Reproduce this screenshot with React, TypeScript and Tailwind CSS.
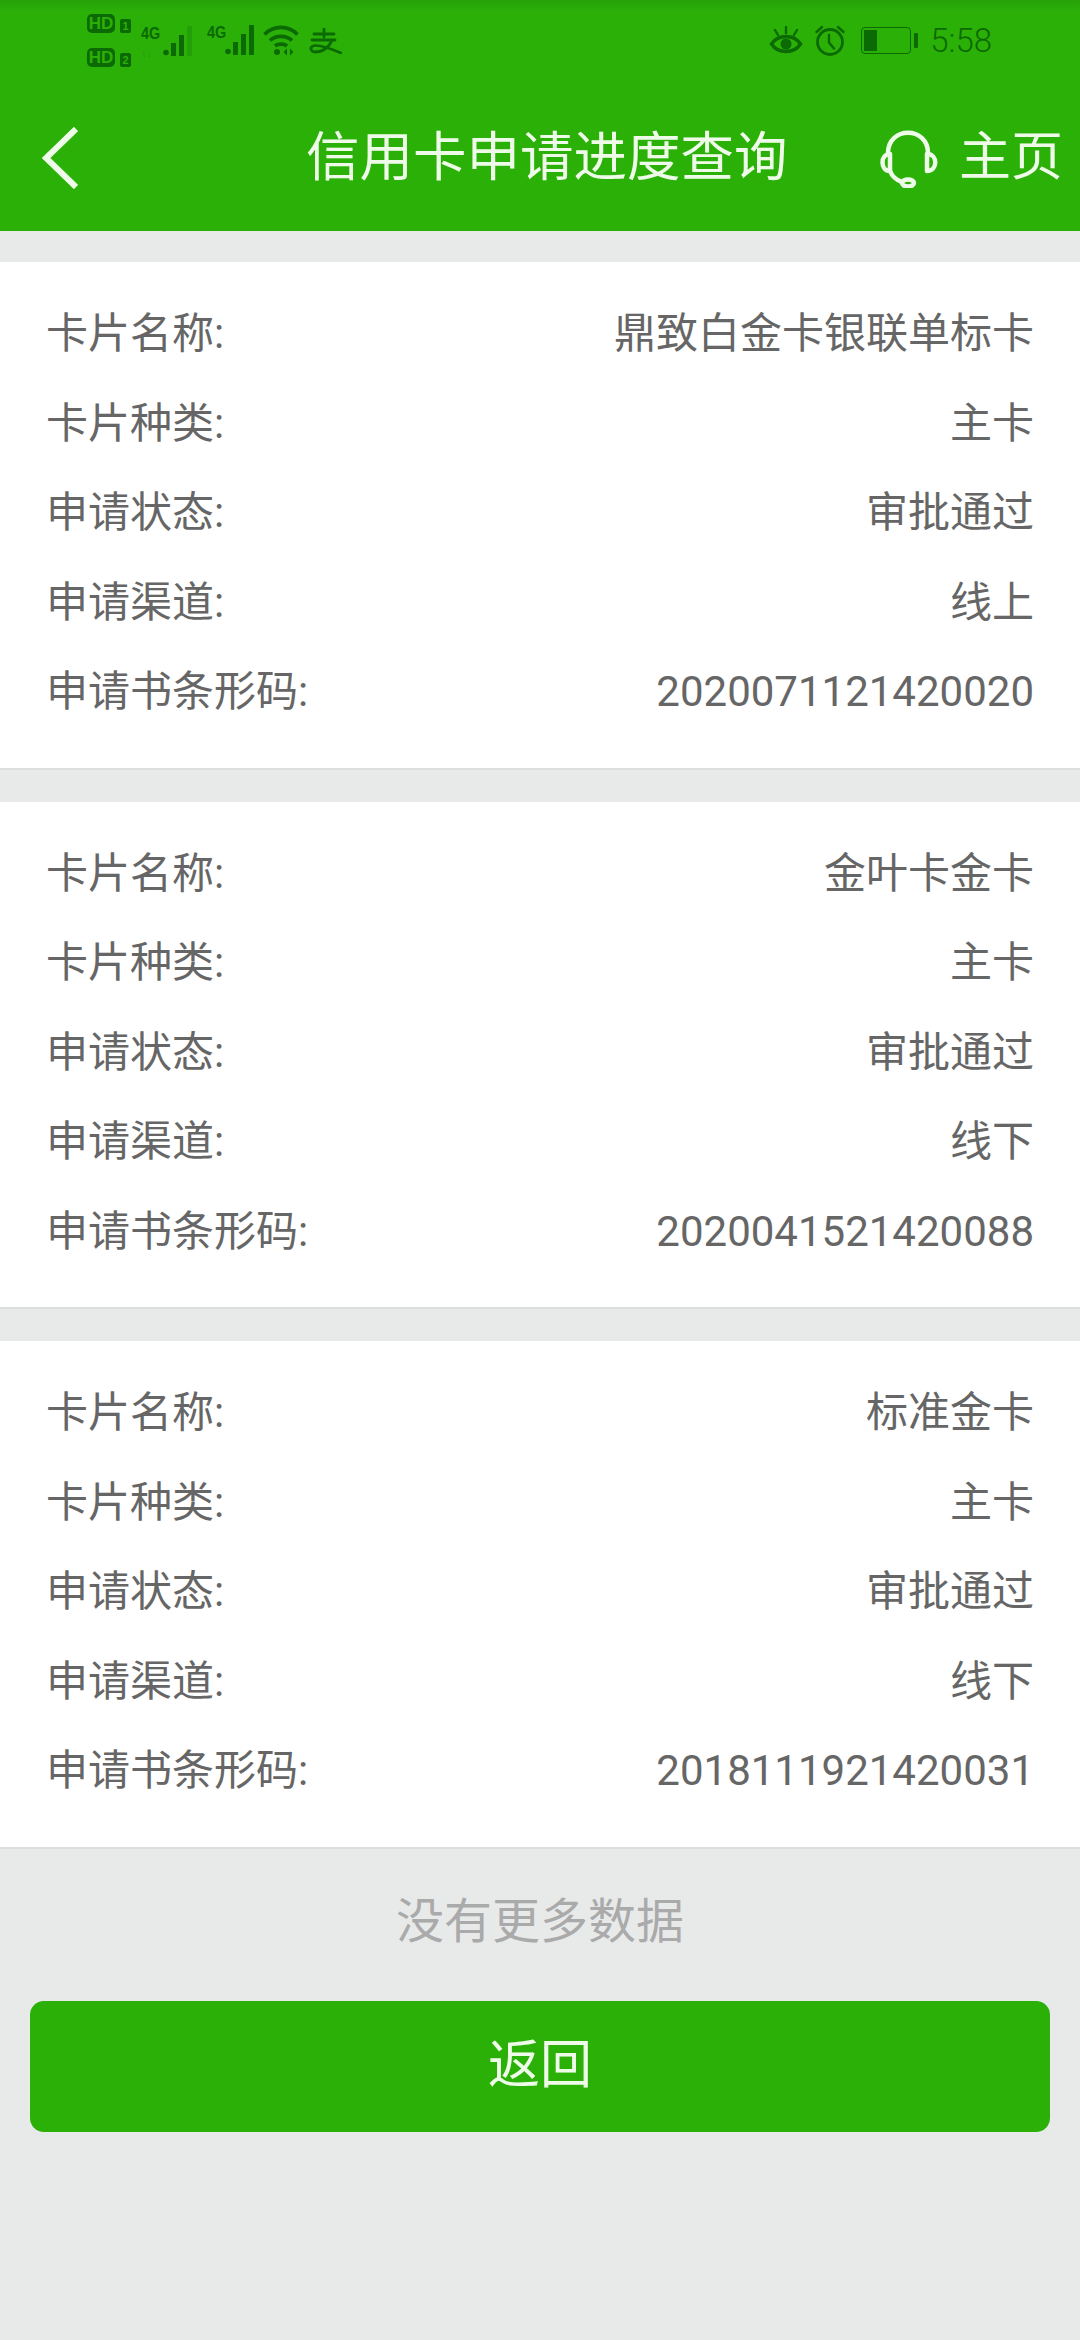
import React from 'react'

const font = { fontFamily: 'Roboto, "Noto Sans CJK SC", sans-serif' }

const cards = [
  { name: '鼎致白金卡银联单标卡', type: '主卡', status: '审批通过', channel: '线上', code: '2020071121420020' },
  { name: '金叶卡金卡', type: '主卡', status: '审批通过', channel: '线下', code: '2020041521420088' },
  { name: '标准金卡', type: '主卡', status: '审批通过', channel: '线下', code: '2018111921420031' },
]

const Hd = ({ n }: { n: string }) => (
  <div className="flex items-end gap-[5px]">
    <span className="flex h-[19px] w-[28px] items-center justify-center rounded-[5px] bg-[#0b6a03] font-['Liberation_Sans',sans-serif] text-[17px] leading-none font-bold text-[#2bb008]">
      HD
    </span>
    <span className="flex h-[14px] w-[11px] items-center justify-center rounded-[2px] bg-[#0b6a03] font-['Liberation_Sans',sans-serif] text-[11px] leading-none font-bold text-[#2bb008]">
      {n}
    </span>
  </div>
)

const Signal = ({ faint }: { faint?: boolean }) => (
  <svg width="33" height="31" viewBox="0 0 33 31" fill="#0b6a03">
    <circle cx="3" cy="27.5" r="2.8" />
    <rect x="8" y="18" width="5" height="13" />
    <rect x="16" y="10" width="5" height="21" />
    <rect x="24" y="1" width="5" height="30" opacity={faint ? 0.25 : 1} />
  </svg>
)

const Wifi = () => (
  <svg width="36" height="31" viewBox="0 0 36 31" fill="none" stroke="#0b6a03" strokeWidth="3.8">
    <path d="M1.5 9.5C10.500 0 25.500 0 34.500 9.500" />
    <path d="M7 15.500C12.500 10 23.500 10 29 15.500" />
    <path d="M12 21C15 18.400 21 18.400 24 21" />
    <circle cx="14" cy="27" r="3" fill="#0b6a03" stroke="none" />
    <path d="M24 23.500l-3.500 3.500 3.500 3.500zM27 23.500l3.500 3.500-3.500 3.500z" fill="#0b6a03" stroke="none" />
  </svg>
)

const Alipay = () => (
  <svg width="33" height="26" viewBox="0 0 33 26" fill="none" stroke="#0b6a03" strokeWidth="2.8" strokeLinecap="round">
    <path d="M15 1v8M5 6h20M3 12h23" />
    <path d="M23 12C20 20 13 24 6 24 2 24 1 20 3 18.500 7 15.500 18 19 32 25" />
  </svg>
)

const Eye = () => (
  <svg width="34" height="30" viewBox="0 0 34 30" fill="none" stroke="#0b6a03" strokeWidth="3.4" strokeLinecap="round">
    <path d="M2.500 18C9 8 25 8 31.500 18 25 28 9 28 2.500 18Z" />
    <circle cx="17" cy="18" r="5.500" fill="#0b6a03" stroke="none" />
    <path d="M17 1v6M6 4l3 5M28 4l-3 5" strokeWidth="2.4" />
  </svg>
)

const Alarm = () => (
  <svg width="30" height="31" viewBox="0 0 30 31" fill="none" stroke="#0b6a03" strokeWidth="2.800" strokeLinecap="round">
    <circle cx="15" cy="17" r="12.500" />
    <path d="M14 10v7.500l5 6" strokeWidth="2.400" />
    <path d="M1.500 7L7 2M28.500 7L23 2" strokeWidth="2.400" />
  </svg>
)

const Battery = () => (
  <div className="flex items-center gap-[3px]">
    <div className="flex h-[27px] w-[50px] rounded-[4px] border-[1.5px] border-[#0b6a03] p-[2px]">
      <div className="h-full w-[13px] bg-[#0b6a03]" />
    </div>
    <div className="h-[15px] w-[4px] rounded-[1px] bg-[#0b6a03]" />
  </div>
)

const Headset = () => (
  <svg width="62" height="60" viewBox="0 0 62 60" fill="none" stroke="#effbe9" strokeWidth="4.500" strokeLinecap="round" strokeLinejoin="round">
    <path d="M10 25C10 -2 50 -2 50 25" />
    <path d="M12 26C2 26 2 43 12 43Z" />
    <path d="M49 26C60 26 60 43 49 43Z" />
    <path d="M12 43C14 48 18 52 24 54" />
    <ellipse cx="30" cy="55" rx="6" ry="3.500" />
  </svg>
)

const Row = ({ label, value }: { label: string; value: string }) => (
  <div className="flex h-[89.5px] items-center justify-between text-[42px] text-[#666666]">
    <span>{label}</span>
    <span>{value}</span>
  </div>
)

export default function App() {
  return (
    <div className="min-h-[2340px] bg-[#e8eaea]" style={font}>
      <header className="h-[231px] bg-[#2bb008] bg-gradient-to-b from-[#26a107] to-[#2bb008] to-[5%]">
        <div className="flex h-[76px] items-start pt-[14px] pl-[87px] pr-[88px]">
          <div className="flex flex-col gap-[15px]">
            <Hd n="1" />
            <Hd n="2" />
          </div>
          <div className="ml-[10px] mt-[11px] flex flex-col font-['Liberation_Sans',sans-serif] text-[17px] leading-none font-bold text-[#0b6a03]">
            <span className="origin-left scale-x-85">4G</span>
            <span className="mt-[6px] text-[11px] opacity-25">↑↓</span>
          </div>
          <div className="mt-[11px] ml-[-1px]">
            <Signal faint />
          </div>
          <span className="mt-[10px] ml-[11px] origin-left scale-x-85 font-['Liberation_Sans',sans-serif] text-[17px] leading-none font-bold text-[#0b6a03]">
            4G
          </span>
          <div className="mt-[10px] ml-[-4px]">
            <Signal />
          </div>
          <div className="mt-[11px] ml-[5px]">
            <Wifi />
          </div>
          <div className="mt-[14px] ml-[10px]">
            <Alipay />
          </div>
          <div className="ml-auto mt-[10px] flex items-center">
            <Eye />
            <div className="ml-[12px]">
              <Alarm />
            </div>
            <div className="ml-[16px]">
              <Battery />
            </div>
            <span className="ml-[12px] text-[33px] leading-none font-light text-[#0b6a03]">5:58</span>
          </div>
        </div>
        <div className="flex h-[155px] items-center pt-[8px] text-white">
          <svg className="ml-[42px]" width="36" height="62" viewBox="0 0 36 62" fill="none" stroke="#effbe9" strokeWidth="6">
            <path d="M34 2L4 31L34 60" />
          </svg>
          <h1 className="ml-[228px] text-[53.5px] leading-none font-normal text-[#effbe9]">信用卡申请进度查询</h1>
          <div className="ml-auto mr-[17px] flex items-center gap-[19px]">
            <Headset />
            <span className="text-[52px] leading-none text-[#effbe9]">主页</span>
          </div>
        </div>
      </header>

      <main className="flex flex-col gap-[32px] pt-[31px]">
        {cards.map(c => (
          <section key={c.code} className="border-b-2 border-[#dcdedd] bg-white pt-[27px] pb-[31px] pl-[46px] pr-[46px]">
            <Row label="卡片名称:" value={c.name} />
            <Row label="卡片种类:" value={c.type} />
            <Row label="申请状态:" value={c.status} />
            <Row label="申请渠道:" value={c.channel} />
            <Row label="申请书条形码:" value={c.code} />
          </section>
        ))}
      </main>

      <p className="mt-[43px] text-center text-[48px] leading-[60px] text-[#aaaaaa]">没有更多数据</p>
      <button className="mx-[30px] mt-[49px] flex h-[131px] w-[1020px] items-center justify-center rounded-[14px] bg-[#2bb008] text-[52px] text-[#effbe9]">
        返回
      </button>
    </div>
  )
}
